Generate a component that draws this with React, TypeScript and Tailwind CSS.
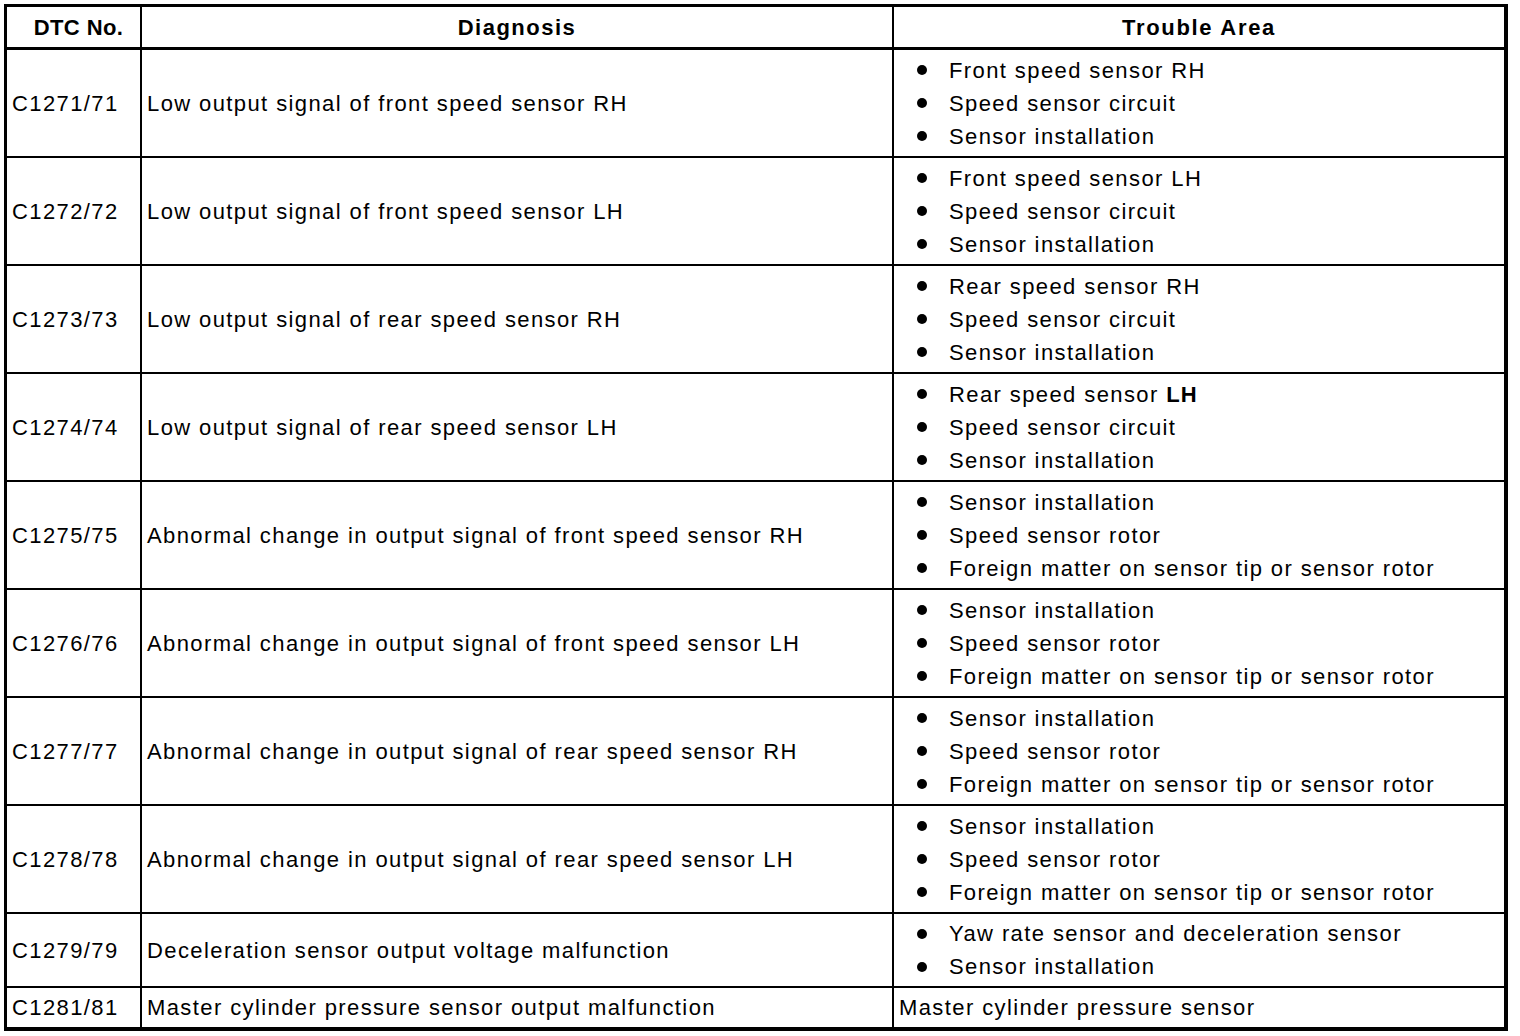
import React from "react";

type Row = { code: string; diag: string; areas: string[] | string; h: string };

const rows: Row[] = [
  { code: "C1271/71", diag: "Low output signal of front speed sensor RH", areas: ["Front speed sensor RH", "Speed sensor circuit", "Sensor installation"], h: "h-[106px]" },
  { code: "C1272/72", diag: "Low output signal of front speed sensor LH", areas: ["Front speed sensor LH", "Speed sensor circuit", "Sensor installation"], h: "h-[106px]" },
  { code: "C1273/73", diag: "Low output signal of rear speed sensor RH", areas: ["Rear speed sensor RH", "Speed sensor circuit", "Sensor installation"], h: "h-[106px]" },
  { code: "C1274/74", diag: "Low output signal of rear speed sensor LH", areas: ["Rear speed sensor LH", "Speed sensor circuit", "Sensor installation"], h: "h-[106px]" },
  { code: "C1275/75", diag: "Abnormal change in output signal of front speed sensor RH", areas: ["Sensor installation", "Speed sensor rotor", "Foreign matter on sensor tip or sensor rotor"], h: "h-[106px]" },
  { code: "C1276/76", diag: "Abnormal change in output signal of front speed sensor LH", areas: ["Sensor installation", "Speed sensor rotor", "Foreign matter on sensor tip or sensor rotor"], h: "h-[106px]" },
  { code: "C1277/77", diag: "Abnormal change in output signal of rear speed sensor RH", areas: ["Sensor installation", "Speed sensor rotor", "Foreign matter on sensor tip or sensor rotor"], h: "h-[106px]" },
  { code: "C1278/78", diag: "Abnormal change in output signal of rear speed sensor LH", areas: ["Sensor installation", "Speed sensor rotor", "Foreign matter on sensor tip or sensor rotor"], h: "h-[106px]" },
  { code: "C1279/79", diag: "Deceleration sensor output voltage malfunction", areas: ["Yaw rate sensor and deceleration sensor", "Sensor installation"], h: "h-[72px]" },
  { code: "C1281/81", diag: "Master cylinder pressure sensor output malfunction", areas: "Master cylinder pressure sensor", h: "h-[39px]" },
];

function AreaText({ text, code }: { text: string; code: string }) {
  if (code === "C1274/74" && text === "Rear speed sensor LH") {
    return (
      <span className="ml-[22px]">
        Rear speed sensor <span className="font-bold tracking-[1px]">LH</span>
      </span>
    );
  }
  return <span className="ml-[22px]">{text}</span>;
}

export default function App() {
  return (
    <div className="w-[1520px] h-[1036px] bg-white text-black pt-[4px] pl-[4px]" style={{ fontFamily: '"Liberation Sans", Arial, sans-serif' }}>
      <div className="w-[1504px] border-t-[3px] border-l-[3px] border-r-4 border-b-4 border-black text-[22px] leading-[33px] tracking-[1.4px]">
        <div className="flex h-[43px] border-b-[3px] border-black font-bold">
          <div className="w-[133px] flex items-center justify-center pl-[10px] tracking-[0.4px]">DTC No.</div>
          <div className="w-[752px] border-l-2 border-black flex items-center justify-center tracking-[1.5px]">Diagnosis</div>
          <div className="flex-1 border-l-2 border-black flex items-center justify-center tracking-[1.7px]">Trouble Area</div>
        </div>
        {rows.map((r, i) => (
          <div key={r.code} className={`flex ${r.h} ${i < rows.length - 1 ? "box-content border-b-2 border-black" : ""}`}>
            <div className="w-[133px] flex items-center pl-[5px]">{r.code}</div>
            <div className="w-[752px] border-l-2 border-black flex items-center pl-[5px]">{r.diag}</div>
            <div className="flex-1 border-l-2 border-black flex flex-col justify-center pl-[5px]">
              {Array.isArray(r.areas) ? (
                r.areas.map((a) => (
                  <div key={a} className="flex items-center">
                    <span className="ml-[18px] w-[10px] h-[10px] rounded-full bg-black inline-block" />
                    <AreaText text={a} code={r.code} />
                  </div>
                ))
              ) : (
                <div>{r.areas}</div>
              )}
            </div>
          </div>
        ))}
      </div>
    </div>
  );
}
